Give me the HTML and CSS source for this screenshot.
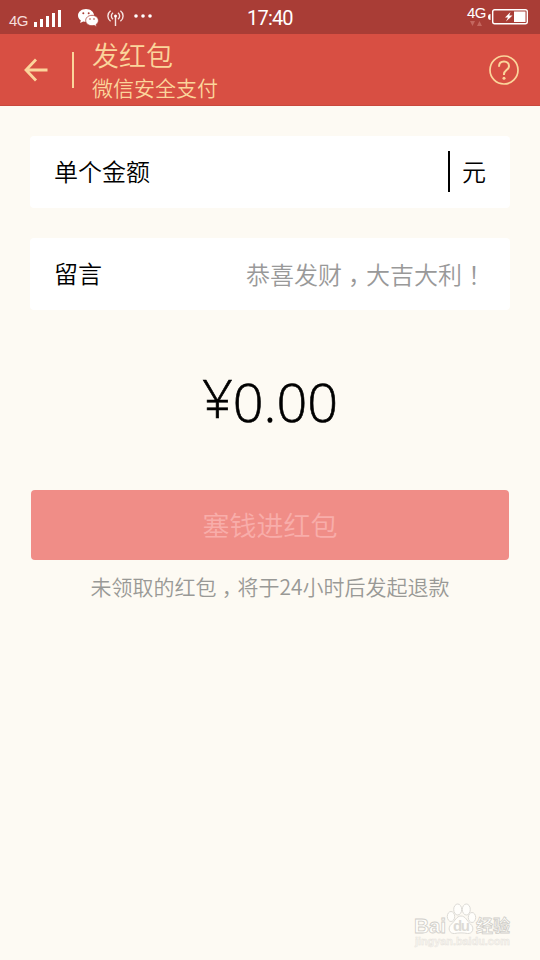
FILE: index.html
```
<!DOCTYPE html>
<html lang="zh-CN">
<head>
  <meta charset="UTF-8" />
  <meta name="viewport" content="width=device-width, initial-scale=1.0" />
  <title>发红包</title>
  <link rel="stylesheet" href="styles.css">
</head>
<body>
  <div class="status">
    <span class="net">4G</span>
    <svg class="signal" width="28" height="18" viewBox="0 0 28 18" fill="#fff">
      <rect x="0" y="13" width="3" height="5"/>
      <rect x="6" y="10" width="3" height="8"/>
      <rect x="12" y="7" width="3" height="11"/>
      <rect x="18" y="4" width="3" height="14"/>
      <rect x="24" y="1" width="3" height="17"/>
    </svg>
    <svg class="wechat" width="21" height="18" viewBox="0 0 21 18">
      <path fill="#fff" d="M8 0C3.500 0 0 2.900 0 6.400c0 2 1.100 3.700 2.800 4.900L2.200 14l3-1.600c.9.3 1.800.4 2.800.4 4.500 0 8-2.900 8-6.400S12.500 0 8 0z"/>
      <path fill="#fff" stroke="#a93d36" stroke-width=".8" d="M14 6.300c-3.600 0-6.300 2.300-6.300 5.200s2.700 5.200 6.300 5.200c.8 0 1.500-.1 2.200-.3l2.500 1.300-.6-2.200c1.400-.9 2.300-2.300 2.300-4 0-2.900-2.800-5.200-6.400-5.200z"/>
      <g fill="#a93d36">
        <circle cx="5.300" cy="4.300" r="1"/><circle cx="10.700" cy="4.300" r="1"/>
        <circle cx="12" cy="10" r=".8"/><circle cx="16" cy="10" r=".8"/>
      </g>
    </svg>
    <svg class="antenna" width="17" height="17" viewBox="0 0 17 17" fill="none" stroke="#f7e4e2" stroke-width="1.400">
      <path d="M3.600.8C0 3.500 0 8.500 3.600 11.200M6 2.800c-2.200 1.700-2.200 4.700 0 6.400M11 2.800c2.200 1.700 2.200 4.700 0 6.400M13.400.8c3.600 2.700 3.600 7.700 0 10.400M8.500 7v9"/>
      <circle cx="8.500" cy="6" r="1.500" fill="#fff" stroke="none"/>
    </svg>
    <svg class="more" width="18" height="4" viewBox="0 0 18 4" fill="#fff">
      <circle cx="2" cy="2" r="1.800"/><circle cx="9" cy="2" r="1.800"/><circle cx="16" cy="2" r="1.800"/>
    </svg>
    <span class="time">17:40</span>
    <div class="data">
      <span class="net">4G</span>
      <svg width="12" height="5" viewBox="0 0 12 5" fill="#c4675f"><path d="M0 0h5L2.500 5zM7 5h5L9.500 0z"/></svg>
    </div>
    <svg class="battery" width="40" height="16" viewBox="0 0 40 16">
      <path fill="#fff" d="M2.500 5v6a2.500 3 0 0 1 0-6z"/>
      <rect x="4.700" y=".7" width="34.600" height="14" rx="2" fill="none" stroke="#fff" stroke-width="1.400"/>
      <rect x="26" y="2.500" width="11.500" height="10.500" fill="#fff"/>
      <path fill="#fff" d="M22.500 3L17 8.500h3L18 12.500l6.500-6h-3.300l1.300-3.500z"/>
    </svg>
  </div>

  <div class="header">
    <svg class="back" width="24" height="24" viewBox="0 0 24 24" fill="none" stroke="#fbd59b" stroke-width="2.800">
      <path d="M12 1.500L2 12l10 10.500M2 12h21.500"/>
    </svg>
    <div class="divider"></div>
    <div class="titles">
      <h1>发红包</h1>
      <p>微信安全支付</p>
    </div>
    <svg class="help" width="30" height="30" viewBox="0 0 30 30" fill="none" stroke="#fbd59b">
      <circle cx="15" cy="15" r="14" stroke-width="1.700"/>
      <path stroke-width="2" d="M10 11.700c0-3.200 2.100-5.200 5-5.200s5 1.900 5 4.700c0 3.600-5 4.200-5 7.800v1"/>
      <circle cx="15" cy="23.300" r="1.500" fill="#fbd59b" stroke="none"/>
    </svg>
  </div>

  <div class="form">
    <div class="field">
      <label>单个金额</label>
      <span class="cursor"></span>
      <span class="unit">元</span>
    </div>
    <div class="field">
      <label>留言</label>
      <span class="hint">恭喜发财<span class="mark">，</span>大吉大利<span class="mark">！</span></span>
    </div>

    <div class="total"><span class="yen">¥</span>0.00</div>

    <button class="send">塞钱进红包</button>
    <p class="note">未领取的红包<span class="mark">，</span>将于24小时后发起退款</p>
  </div>

  <div class="watermark">
    <svg width="98" height="46" viewBox="0 0 98 46">
      <g class="wm-line">
        <ellipse cx="37" cy="13.500" rx="3.700" ry="5"/>
        <ellipse cx="43.700" cy="6.500" rx="4" ry="5.500"/>
        <ellipse cx="52.300" cy="6.500" rx="4" ry="5.500"/>
        <ellipse cx="58" cy="14.500" rx="3.700" ry="5"/>
        <path d="M47 13c-4.500 0-6 5-9.500 8-4.500 4-2 10 3 9.500 4-.8 9-.8 13 0 5 .5 7.500-5.500 3-9.500C53 18 51.500 13 47 13z"/>
      </g>
      <g class="wm-text">
        <text x="0" y="30" font-size="21" textLength="32">Bai</text>
        <text class="wm-du" x="39" y="28" font-size="15" textLength="17">du</text>
        <text x="62" y="29" font-size="17" textLength="34">经验</text>
      </g>
      <text class="wm-url" x="1" y="42" font-size="10" textLength="95" lengthAdjust="spacingAndGlyphs">jingyan.baidu.com</text>
    </svg>
  </div>
</body>
</html>
```
FILE: styles.css
```
* {
  box-sizing: border-box;
}

body {
  font-family: "Noto Sans CJK SC", sans-serif;
  font-weight: 350;
  background-color: #fdfaf3;
  color: #000;
  margin: 0;
  height: 960px;
  display: flex;
  flex-direction: column;
  overflow: hidden;
}

h1, p {
  margin: 0;
  font-weight: 350;
}

.status {
  display: flex;
  align-items: flex-start;
  height: 34px;
  padding: 0 12px 0 9px;
  background-color: #a93d36;
  color: #fff;
  font-family: "Liberation Sans", sans-serif;
  font-weight: 400;
}

.net {
  font-size: 15px;
  line-height: 16px;
  letter-spacing: -0.5px;
}

.status > .net {
  width: 25px;
  margin-top: 13px;
  color: #f5dedc;
}

.signal {
  margin-top: 9px;
}

.wechat {
  margin: 9px 0 0 16px;
}

.antenna {
  margin: 10px 0 0 8px;
}

.more {
  margin: 14px 0 0 10px;
}

.time {
  margin: 6px 0 0 95px;
  font-family: Roboto, sans-serif;
  font-size: 20px;
  line-height: 24px;
  letter-spacing: -0.8px;
}

.data {
  display: flex;
  flex-direction: column;
  align-items: center;
  margin: 5px 2px 0 auto;
}

.battery {
  margin-top: 9px;
}

.header {
  display: flex;
  align-items: center;
  height: 72px;
  padding: 0 21px 0 24px;
  background-color: #d84f43;
  border-bottom: 1px solid #c9483d;
  color: #fbd59b;
}

.divider {
  width: 2px;
  height: 36px;
  margin: 0 18px 0 24px;
  background-color: #fbd59b;
}

.titles {
  display: flex;
  flex-direction: column;
  padding-top: 2px;
}

.titles h1 {
  font-size: 27px;
  line-height: 33px;
}

.titles p {
  font-size: 21px;
  line-height: 32px;
}

.help {
  margin-left: auto;
}

.form {
  display: flex;
  flex-direction: column;
  padding: 30px 30px 0;
}

.field {
  display: flex;
  align-items: center;
  height: 72px;
  margin-bottom: 30px;
  padding: 0 24px 2px;
  background-color: #fff;
  border-radius: 4px;
  font-size: 24px;
}

.field label,
.unit {
  padding-bottom: 2px;
}

.cursor {
  width: 2px;
  height: 41px;
  margin: 0 12px 0 auto;
  background-color: #000;
}

.hint {
  margin-left: auto;
  color: #999;
}

/* half-width punctuation centered in a full cell */
.mark {
  font-feature-settings: "halt";
  padding: 0 0.25em;
}

.total {
  display: flex;
  justify-content: center;
  height: 150px;
  padding-top: 21px;
  font-family: "Open Sans", sans-serif;
  font-weight: 300;
  font-size: 54px;
  line-height: 80px;
  -webkit-text-stroke: 0.6px #000;
}

.yen {
  margin-top: -4px;
}

.send {
  height: 70px;
  margin: 0 1px;
  padding-bottom: 3px;
  border: none;
  border-radius: 4px;
  background-color: #f08d87;
  color: #f8adaa;
  font-family: inherit;
  font-size: 27px;
  font-weight: 350;
}

.note {
  margin-top: 10px;
  color: #999996;
  font-size: 21px;
  line-height: 32px;
  text-align: center;
}

.watermark {
  display: flex;
  justify-content: flex-end;
  margin: auto 28px 11px 0;
}

.wm-line {
  fill: #fffefb;
  stroke: #dddbd6;
  stroke-width: 1;
}

.wm-text {
  fill: #fffefb;
  stroke: #d0cec9;
  stroke-width: 0.8;
  font-family: "Liberation Sans", "Noto Sans CJK SC", sans-serif;
  font-weight: 700;
}

.wm-du {
  fill: #dddbd6;
  stroke: none;
}

.wm-url {
  fill: #f8f5ef;
  stroke: #e5e2dc;
  stroke-width: 0.4;
  font-family: "Liberation Sans", sans-serif;
  font-weight: 700;
}
```
